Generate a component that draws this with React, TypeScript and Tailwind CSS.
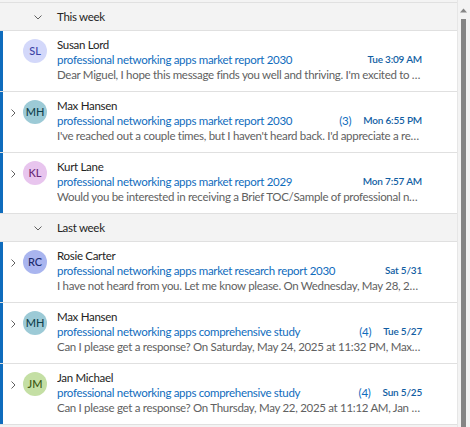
import React from "react";

type Msg = {
  name: string;
  initials: string;
  avBg: string;
  avFg: string;
  subject: string;
  count?: string;
  date: string;
  preview: string;
  chevron: boolean;
};

const thisWeek: Msg[] = [
  {
    name: "Susan Lord",
    initials: "SL",
    avBg: "bg-[#d3d8fa]",
    avFg: "text-[#3c43a6]",
    subject: "professional networking apps market report 2030",
    date: "Tue 3:09 AM",
    preview:
      "Dear Miguel, I hope this message finds you well and thriving. I'm excited to share with you",
    chevron: false,
  },
  {
    name: "Max Hansen",
    initials: "MH",
    avBg: "bg-[#9ccad6]",
    avFg: "text-[#103f4b]",
    subject: "professional networking apps market report 2030",
    count: "(3)",
    date: "Mon 6:55 PM",
    preview:
      "I've reached out a couple times, but I haven't heard back. I'd appreciate a response when",
    chevron: true,
  },
  {
    name: "Kurt Lane",
    initials: "KL",
    avBg: "bg-[#e8c5ee]",
    avFg: "text-[#6a2a78]",
    subject: "professional networking apps market report 2029",
    date: "Mon 7:57 AM",
    preview:
      "Would you be interested in receiving a Brief TOC/Sample of professional networking apps",
    chevron: true,
  },
];

const lastWeek: Msg[] = [
  {
    name: "Rosie Carter",
    initials: "RC",
    avBg: "bg-[#a9b5ef]",
    avFg: "text-[#1b2a6d]",
    subject: "professional networking apps market research report 2030",
    date: "Sat 5/31",
    preview:
      "I have not heard from you. Let me know please. On Wednesday, May 28, 2025 at 10:00 AM",
    chevron: true,
  },
  {
    name: "Max Hansen",
    initials: "MH",
    avBg: "bg-[#9ccad6]",
    avFg: "text-[#103f4b]",
    subject: "professional networking apps comprehensive study",
    count: "(4)",
    date: "Tue 5/27",
    preview:
      "Can I please get a response? On Saturday, May 24, 2025 at 11:32 PM, Max Hansen wrote",
    chevron: true,
  },
  {
    name: "Jan Michael",
    initials: "JM",
    avBg: "bg-[#c4dfa4]",
    avFg: "text-[#3a5713]",
    subject: "professional networking apps comprehensive study",
    count: "(4)",
    date: "Sun 5/25",
    preview:
      "Can I please get a response? On Thursday, May 22, 2025 at 11:12 AM, Jan Michael wrote",
    chevron: true,
  },
];

function ChevronRight() {
  return (
    <svg width="8" height="10" viewBox="0 0 8 10" className="block">
      <path d="M2.5 1.5 L6 5 L2.5 8.5" fill="none" stroke="#616161" strokeWidth="1" />
    </svg>
  );
}

function ChevronDown() {
  return (
    <svg width="10" height="8" viewBox="0 0 10 8" className="block">
      <path d="M1.5 2.5 L5 6 L8.5 2.5" fill="none" stroke="#616161" strokeWidth="1" />
    </svg>
  );
}

function Header({ label }: { label: string }) {
  return (
    <div className="flex h-[28px] items-center border-b border-[#e0e0e0] bg-[#f3f3f3]">
      <div className="flex w-[57px] justify-end pr-[14px]">
        <ChevronDown />
      </div>
      <span className="text-[11.5px] tracking-[-0.3px] text-[#242424]">{label}</span>
    </div>
  );
}

function Row({ m }: { m: Msg }) {
  return (
    <div className="flex h-[61px] border-b border-[#e0e0e0] bg-white">
      <div className="w-[3px] shrink-0 bg-[#0f6cbd]" />
      <div className="flex w-[20px] shrink-0 items-start justify-center pt-[16px]">
        {m.chevron ? <ChevronRight /> : null}
      </div>
      <div className="w-[34px] shrink-0 pt-[8px]">
        <div
          className={`flex h-[24px] w-[24px] items-center justify-center rounded-full text-[11px] font-medium ${m.avBg} ${m.avFg}`}
        >
          {m.initials}
        </div>
      </div>
      <div className="min-w-0 flex-1 pr-[35px] pt-[6px] text-[11.5px] leading-[15px] tracking-[-0.3px]">
        <div className="truncate text-[#242424]">{m.name}</div>
        <div className="flex items-center">
          <span className="min-w-0 flex-1 truncate text-[#0f6cbd]">{m.subject}</span>
          {m.count ? <span className="ml-2 pr-[12px] text-[#0f6cbd]">{m.count}</span> : null}
          <span className="shrink-0 text-[10px] font-semibold tracking-[-0.2px] text-[#115ea3]">
            {m.date}
          </span>
        </div>
        <div className="truncate text-[#616161]">{m.preview}</div>
      </div>
    </div>
  );
}

export default function App() {
  return (
    <div className="flex h-[427px] w-[470px] overflow-hidden bg-[#f3f3f3] font-['Lato',sans-serif]">
      <div className="w-[458px] border-r border-[#e6e6e6] pt-[2px]">
        <div className="border-t border-[#e0e0e0]">
          <Header label="This week" />
          {thisWeek.map((m, i) => (
            <Row key={i} m={m} />
          ))}
          <Header label="Last week" />
          {lastWeek.map((m, i) => (
            <Row key={i} m={m} />
          ))}
        </div>
      </div>
      <div className="ml-[3px] flex w-[5px] flex-col items-center pt-[8px]">
        <svg width="7" height="5" viewBox="0 0 7 5" className="block">
          <path d="M0 4.5 L3.5 0.5 L7 4.5 Z" fill="#858585" />
        </svg>
        <div className="mt-[6px] w-[5px] flex-1 bg-[#858585]" />
      </div>
    </div>
  );
}
